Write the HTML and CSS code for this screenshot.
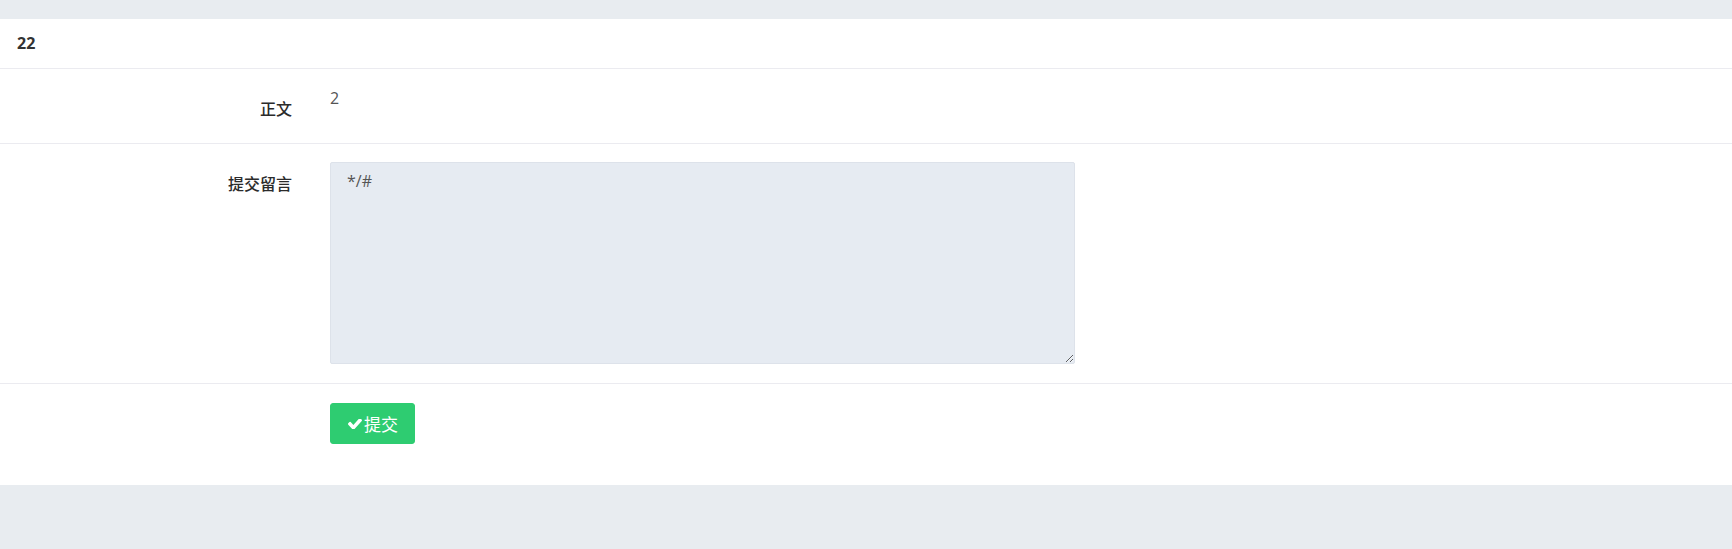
FILE: index.html
```html
<!DOCTYPE html>
<html lang="zh">
<head>
<meta charset="utf-8">
<title>22</title>
<link rel="stylesheet" href="styles.css">
</head>
<body>
<div class="panel">
  <div class="panel-heading">22</div>
  <form class="form">
    <div class="row row-text">
      <label class="label">正文</label>
      <div class="value">2</div>
    </div>
    <div class="row row-area">
      <label class="label" for="msg">提交留言</label>
      <div class="control">
        <textarea id="msg" class="textarea">*/#</textarea>
      </div>
    </div>
    <div class="row row-btn">
      <span class="label"></span>
      <div class="control">
        <button type="button" class="btn">
          <svg class="check" viewBox="121 430 1550 1000" preserveAspectRatio="none" aria-hidden="true"><path fill="#fff" d="M1671 566q0 40-28 68l-724 724-136 136q-28 28-68 28t-68-28l-136-136-362-362q-28-28-28-68t28-68l136-136q28-28 68-28t68 28l294 295 656-657q28-28 68-28t68 28l136 136q28 28 28 68z"/></svg>提交
        </button>
      </div>
    </div>
  </form>
</div>
</body>
</html>
```

FILE: styles.css
```css
* { box-sizing: border-box; }
html, body {
  margin: 0;
  padding: 0;
  background: #e8ecf0;
  font-family: "Open Sans", "Noto Sans CJK SC", sans-serif;
  font-size: 16px;
  color: #333;
}
body { padding-top: 19px; }
.panel {
  background: #fff;
}
.panel-heading {
  height: 50px;
  line-height: 49px;
  padding: 0 17px;
  font-weight: bold;
  color: #333;
  border-bottom: 1px solid #ebebf0;
}
.form { margin: 0; }
.row {
  display: grid;
  grid-template-columns: 292px 1fr;
  column-gap: 38px;
  border-bottom: 1px solid #ebebf0;
}
.row:last-child { border-bottom: none; }
.row-text { padding: 18px 0 24px; }
.row-area { padding: 18px 0 19px; }
.row-btn { padding: 19px 0 41px; }
.label {
  text-align: right;
  padding-top: 10px;
  line-height: 22px;
  font-size: 16px;
  font-weight: 500;
  color: #2b2b2b;
  font-family: "Noto Sans CJK SC", sans-serif;
}
.row-text .label { height: 32px; }
.value {
  line-height: 22px;
  color: #555;
}
.textarea {
  display: block;
  width: 745px;
  height: 202px;
  margin: 0;
  padding: 7px 16px;
  border: 1px solid #dde2ea;
  border-radius: 2px;
  background: #e6ebf2;
  color: #555;
  font-family: "Open Sans", "Noto Sans CJK SC", sans-serif;
  font-size: 16px;
  line-height: 22px;
  resize: both;
  outline: none;
}
.btn {
  display: flex;
  align-items: center;
  height: 41px;
  width: 85px;
  padding: 0 0 0 17px;
  border: 1px solid #2ecc71;
  border-radius: 3px;
  background: #2ecc71;
  color: #fff;
  font-family: "Noto Sans CJK SC", sans-serif;
  font-size: 17px;
  cursor: pointer;
}
.check {
  width: 14px;
  height: 10px;
  margin-right: 2px;
  flex: none;
}
```
